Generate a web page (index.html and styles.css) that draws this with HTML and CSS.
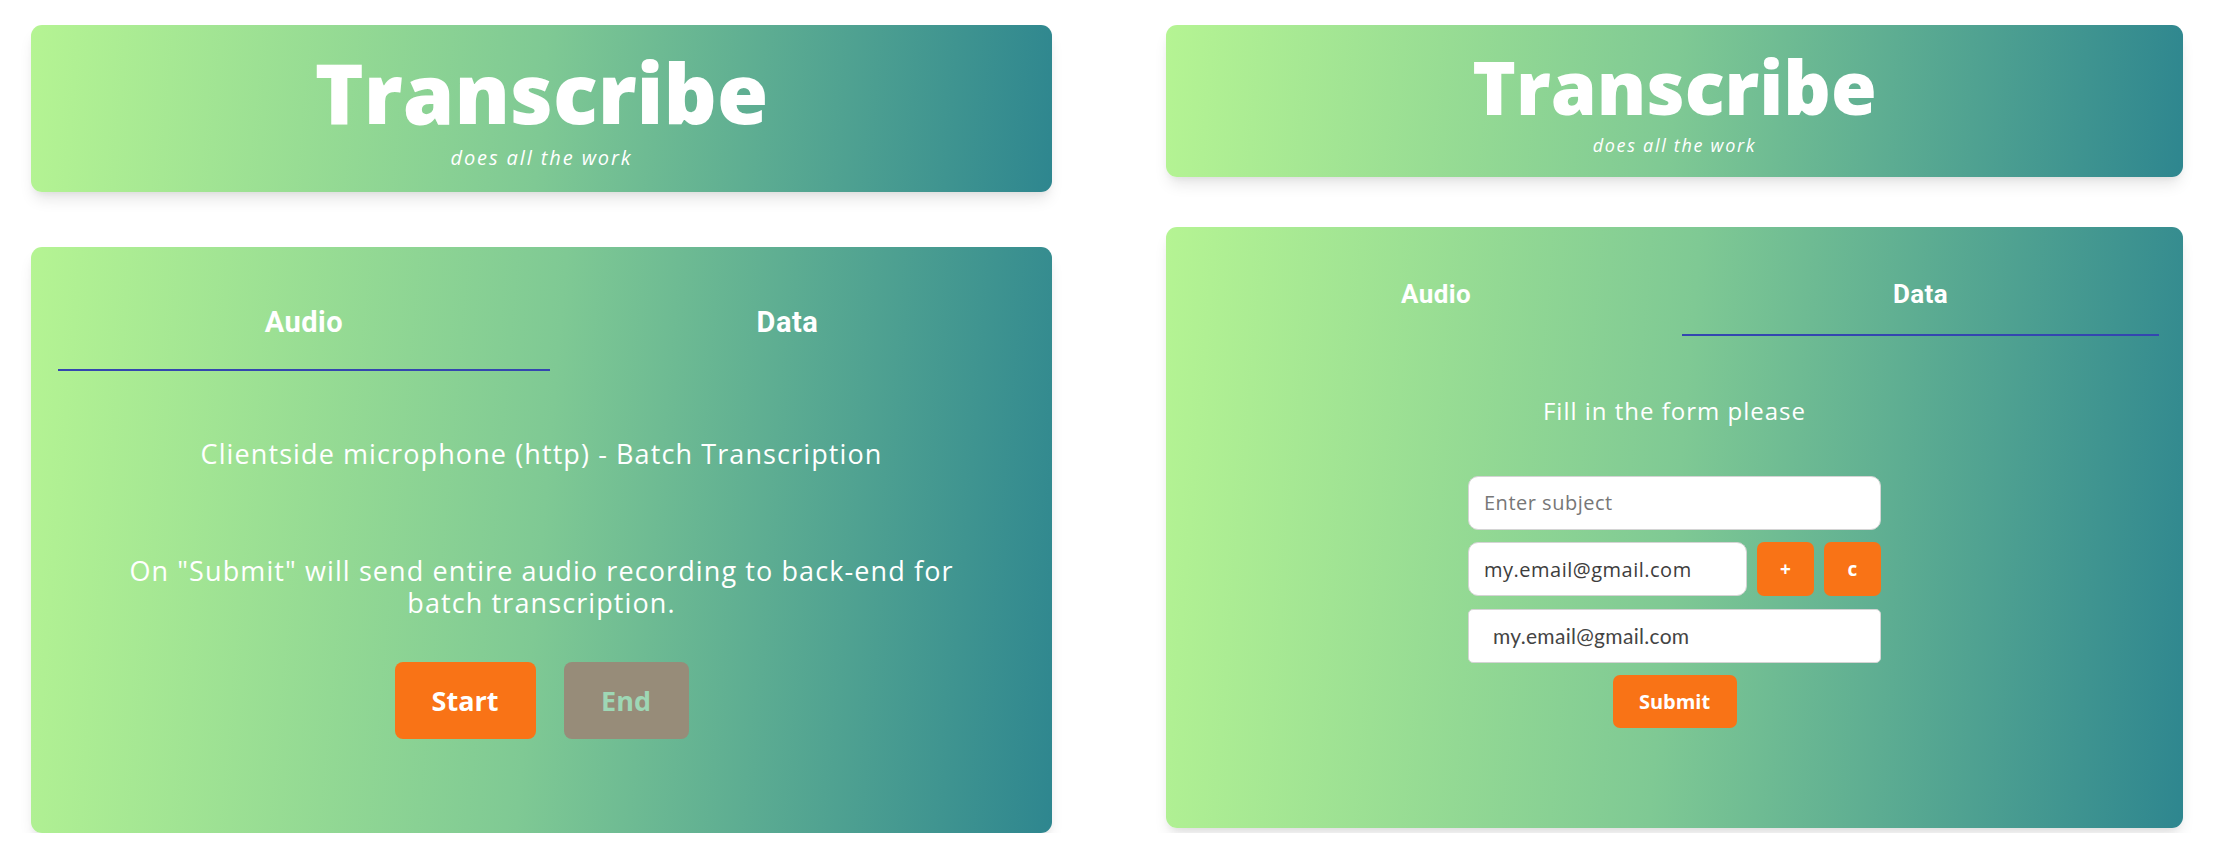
FILE: index.html
```html
<!DOCTYPE html>
<html lang="en">
<head>
<meta charset="utf-8">
<title>Transcribe</title>
<link rel="stylesheet" href="styles.css">
</head>
<body>
<div class="page">
  <section class="panel panel-a">
    <header class="hero">
      <h1 class="hero-title">Transcribe</h1>
      <p class="hero-sub">does all the work</p>
    </header>
    <main class="card">
      <nav class="tabs">
        <div class="tab tab-active">Audio</div>
        <div class="tab">Data</div>
      </nav>
      <div class="audio">
        <p class="lead">Clientside microphone (http) - Batch Transcription</p>
        <p class="note">On "Submit" will send entire audio recording to back-end for batch transcription.</p>
        <div class="actions">
          <button class="btn btn-start">Start</button>
          <button class="btn btn-end">End</button>
        </div>
      </div>
    </main>
  </section>

  <section class="panel panel-b">
    <header class="hero">
      <h1 class="hero-title">Transcribe</h1>
      <p class="hero-sub">does all the work</p>
    </header>
    <main class="card">
      <nav class="tabs">
        <div class="tab">Audio</div>
        <div class="tab tab-active">Data</div>
      </nav>
      <div class="data">
        <p class="lead">Fill in the form please</p>
        <form class="form">
          <input class="field field-subject" type="text" placeholder="Enter subject">
          <div class="row">
            <input class="field field-email" type="text" value="my.email@gmail.com">
            <button type="button" class="sq">+</button>
            <button type="button" class="sq">c</button>
          </div>
          <div class="field field-list">my.email@gmail.com</div>
          <button type="button" class="submit">Submit</button>
        </form>
      </div>
    </main>
  </section>
</div>
</body>
</html>
```
FILE: styles.css
```css
* { box-sizing: border-box; }
html, body { margin: 0; padding: 0; background: #ffffff; }
body { font-family: "Open Sans", "Liberation Sans", sans-serif; color: #fff; }

.page {
  display: grid;
  grid-template-columns: 1021px 1017px;
  column-gap: 114px;
  padding: 25px 36px 0 31px;
  align-items: start;
}

.panel { display: flex; flex-direction: column; }

.hero, .card {
  background: linear-gradient(95deg, #b5f493 0%, #7fc994 50%, #2e868f 100%);
  border-radius: 11px;
  box-shadow: 0 10px 15px -3px rgba(0,0,0,0.10), 0 4px 6px -2px rgba(0,0,0,0.05);
  text-align: center;
}

.hero-title { margin: 0; font-weight: 800; line-height: 1; }
.hero-sub { margin: 0; font-style: italic; font-weight: 400; line-height: 1.2; }

/* panel A */
.panel-a .hero { height: 167px; padding-top: 25px; }
.panel-a .hero-title { font-size: 83px; }
.panel-a .hero-sub { font-size: 20px; letter-spacing: 1.9px; margin-top: 13px; }
.panel-a .card { margin-top: 55px; height: 586px; padding: 27px 27px 0; }

/* panel B */
.panel-b .hero { height: 152px; padding-top: 25px; }
.panel-b .hero-title { font-size: 74px; }
.panel-b .hero-sub { font-size: 18px; letter-spacing: 1.7px; margin-top: 11px; }
.panel-b .card { margin-top: 50px; height: 601px; padding: 24px 24px 0; }

.tabs { display: flex; }
.tab {
  flex: 1 1 auto;
  font-family: Roboto, "Liberation Sans", sans-serif;
  font-weight: 700;
  border-bottom: 2px solid transparent;
}
.tab-active { border-bottom-color: #3446b0; }

.panel-a .tab { font-size: 29px; line-height: 29px; letter-spacing: 0.5px; padding: 34px 0 32px; }
.panel-b .tab { font-size: 26px; line-height: 26px; letter-spacing: 0.4px; padding: 30px 0 27px; }

p { margin: 0; }

.audio .lead { font-size: 27px; line-height: 32.5px; letter-spacing: 1.1px; margin-top: 67px; }
.audio .note { font-size: 27px; line-height: 32px; letter-spacing: 1.1px; margin: 84px auto 0; width: 860px; }

.actions { display: flex; justify-content: center; gap: 28px; margin-top: 43px; }
.btn {
  height: 77px;
  border: none;
  border-radius: 8px;
  font-family: "Open Sans", sans-serif;
  font-weight: 700;
  font-size: 27px;
}
.btn-start { width: 141px; background: #f97316; color: #fff; }
.btn-end { width: 125px; background: #978c79; color: #9ed7b5; }

.data .lead { font-size: 24px; line-height: 28.6px; letter-spacing: 1px; margin-top: 61px; }

.form {
  width: 413px;
  margin: 50px auto 0;
  display: flex;
  flex-direction: column;
  align-items: center;
  gap: 12.5px;
}
.field {
  width: 100%;
  min-width: 0;
  height: 54px;
  background: #fff;
  border: 1px solid #d4d4d4;
  border-radius: 10px;
  font-family: "Open Sans", sans-serif;
  font-size: 20px;
  letter-spacing: 0.5px;
  padding: 0 15px;
  color: #3d3d3d;
  text-align: left;
  outline: none;
}
.field::placeholder { color: #777; }
.row { display: flex; width: 100%; gap: 10px; }
.row .field-email { flex: 1 1 0; width: auto; }
.sq {
  width: 57px;
  height: 54px;
  flex: none;
  border: none;
  border-radius: 7px;
  background: #f97316;
  color: #fff;
  font-family: "Open Sans", sans-serif;
  font-weight: 700;
  font-size: 19px;
}
.field-list {
  display: flex;
  align-items: center;
  border-radius: 5px;
  padding-left: 24px;
  font-family: Lato, sans-serif;
  font-size: 21px;
  letter-spacing: 0.3px;
  color: #444;
}
.submit {
  width: 124px;
  height: 53px;
  border: none;
  border-radius: 7px;
  background: #f97316;
  color: #fff;
  font-family: "Open Sans", sans-serif;
  font-weight: 700;
  font-size: 20px;
}
```
